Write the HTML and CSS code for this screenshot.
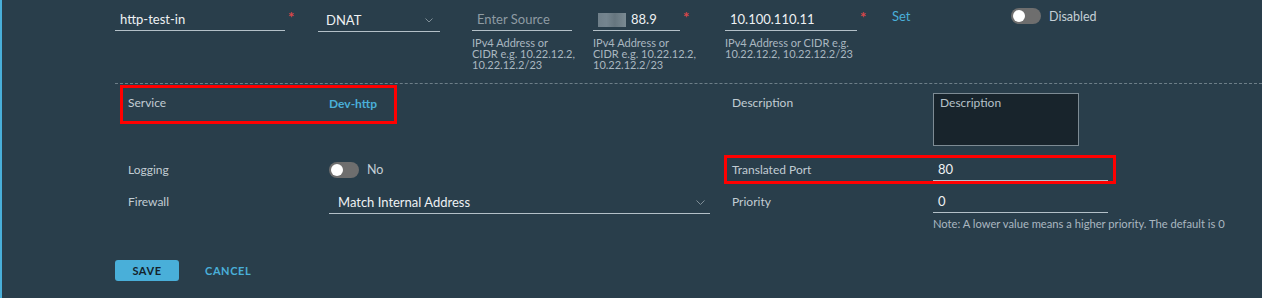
FILE: index.html
```html
<!DOCTYPE html>
<html lang="en">
<head>
<meta charset="utf-8"/>
<meta name="viewport" content="width=device-width, initial-scale=1.0"/>
<title>NAT Rule</title>
<link rel="stylesheet" href="styles.css">
</head>
<body>
  <div class="panel">
    <div class="rule-row">
      <div class="cell cell-name">
        <div class="input-line wide"><span class="value">http-test-in</span></div>
        <span class="req">*</span>
      </div>
      <div class="cell cell-action">
        <div class="input-line select">
          <span class="value">DNAT</span>
          <svg class="chevron" width="8" height="5" viewBox="0 0 8 5"><path d="M0.5 0.5 L4 4 L7.5 0.5" fill="none" stroke="#7f8e97" stroke-width="1"/></svg>
        </div>
      </div>
      <div class="cell cell-source">
        <div class="input-line src"><span class="placeholder">Enter Source</span></div>
        <p class="hint">IPv4 Address or CIDR e.g. 10.22.12.2, 10.22.12.2/23</p>
      </div>
      <div class="cell cell-dest">
        <div class="field-wrap">
          <div class="input-line dest"><span class="masked"></span><span class="value">88.9</span></div>
          <span class="req">*</span>
        </div>
        <p class="hint">IPv4 Address or CIDR e.g. 10.22.12.2, 10.22.12.2/23</p>
      </div>
      <div class="cell cell-trans">
        <div class="field-wrap">
          <div class="input-line trans"><span class="value">10.100.110.11</span></div>
          <span class="req">*</span>
        </div>
        <p class="hint">IPv4 Address or CIDR e.g. 10.22.12.2, 10.22.12.2/23</p>
      </div>
      <div class="cell cell-set"><a class="link" href="#">Set</a></div>
      <div class="cell cell-state">
        <span class="toggle"><span class="knob"></span></span>
        <span class="toggle-text">Disabled</span>
      </div>
    </div>

    <div class="details">
      <div class="field short highlight">
        <span class="label">Service</span>
        <span class="val"><a class="link strong" href="#">Dev-http</a></span>
      </div>
      <div class="field">
        <span class="label">Description</span>
        <div class="textarea"><span class="placeholder-light">Description</span></div>
      </div>

      <div class="field row-mid">
        <span class="label">Logging</span>
        <span class="val">
          <span class="toggle"><span class="knob"></span></span>
          <span class="toggle-text">No</span>
        </span>
      </div>
      <div class="field row-mid highlight">
        <span class="label">Translated Port</span>
        <div class="input-line port"><span class="value">80</span></div>
      </div>

      <div class="field">
        <span class="label">Firewall</span>
        <div class="input-line select fw">
          <span class="value">Match Internal Address</span>
          <svg class="chevron" width="9" height="5" viewBox="0 0 9 5"><path d="M0.5 0.5 L4.5 4.5 L8.5 0.5" fill="none" stroke="#7f8e97" stroke-width="1"/></svg>
        </div>
      </div>
      <div class="field">
        <span class="label">Priority</span>
        <div class="stack">
          <div class="input-line port"><span class="value">0</span></div>
          <p class="note">Note: A lower value means a higher priority. The default is 0</p>
        </div>
      </div>
    </div>

    <div class="actions">
      <button class="btn-primary">SAVE</button>
      <button class="btn-flat">CANCEL</button>
    </div>
  </div>
</body>
</html>
```

FILE: styles.css
```css
* {
  box-sizing: border-box;
}
body {
  margin: 0;
  background: #293e4b;
  font-family: Lato, "Open Sans", sans-serif;
  color: #eef1f3;
}
.panel {
  border-left: 2px solid #49afd9;
  height: 298px;
  padding-left: 113px;
}
.rule-row {
  display: flex;
  height: 83px;
  padding-top: 9px;
}
.cell {
  flex: none;
  position: relative;
}
.cell-name { width: 203px; display: flex; align-items: flex-start; }
.cell-action { width: 154px; }
.cell-source { width: 121px; }
.cell-dest { width: 132px; }
.cell-trans { width: 167px; }
.cell-set { width: 119px; }
.cell-state { display: flex; align-items: center; height: 16px; margin-top: -1px; }
.field-wrap {
  display: flex;
  align-items: flex-start;
}
.input-line {
  height: 22px;
  border-bottom: 1px solid #b3c0c8;
  font-size: 13px;
  line-height: 21px;
  padding-left: 5px;
  display: flex;
  align-items: center;
  white-space: nowrap;
  overflow: hidden;
}
.input-line.wide { width: 170px; }
.input-line.select { width: 122px; height: 23px; padding-left: 8px; justify-content: space-between; padding-right: 7px; }
.input-line.src { width: 100px; }
.input-line.dest { width: 87px; }
.input-line.trans { width: 132px; }
.input-line.port { width: 175px; }
.input-line.fw { width: 381px; padding-left: 9px; padding-right: 5px; }
.placeholder {
  color: #8e9ba3;
}
.masked {
  display: inline-block;
  width: 28px;
  height: 14px;
  margin-right: 5px;
  background: linear-gradient(90deg, #6f7f89 0, #75858f 30%, #66767f 60%, #7a8a93 100%);
  filter: blur(0.6px);
}
.req {
  color: #d9474a;
  font-size: 15px;
  font-weight: bold;
  line-height: 12px;
  margin-left: 3px;
  margin-top: 2px;
}
.hint {
  margin: 6px 0 0;
  width: 104px;
  font-size: 11px;
  line-height: 11px;
  color: #a9b7c0;
}
.cell-trans .hint {
  width: 134px;
}
.link {
  color: #49afd9;
  text-decoration: none;
  font-size: 13px;
}
.cell-set .link {
  display: block;
  line-height: 14px;
}
.link.strong {
  font-size: 12px;
  font-weight: bold;
}
.toggle {
  display: inline-block;
  width: 30px;
  height: 16px;
  border-radius: 8px;
  background: #6e6e6e;
  position: relative;
  flex: none;
}
.knob {
  position: absolute;
  left: 2px;
  top: 2px;
  width: 12px;
  height: 12px;
  border-radius: 50%;
  background: #fff;
}
.toggle-text {
  margin-left: 8px;
  font-size: 12.5px;
  color: #c4cfd6;
}
.details {
  border-top: 1px dashed #6d7e88;
  padding: 1px 0 0 5px;
  display: grid;
  grid-template-columns: 604px 1fr;
  grid-template-rows: 62px 29px auto;
  row-gap: 8px;
}
.field {
  display: flex;
  align-items: flex-start;
  border: 3px solid transparent;
  padding: 0 5px;
  align-self: start;
}
.field.short {
  width: 277px;
  height: 39px;
}
.field.highlight {
  border-color: #ff0000;
}
.field.row-mid {
  height: 29px;
  align-items: center;
  justify-self: start;
}
.field.row-mid:nth-child(3) {
  justify-self: stretch;
}
.label {
  width: 201px;
  flex: none;
  font-size: 12px;
  line-height: 22px;
  color: #c1ccd3;
}
.field.short .label,
.field.short .val {
  margin-top: 4px;
}
.details > .field:nth-child(2) .label {
  margin-top: 4px;
}
.val {
  display: flex;
  align-items: center;
  height: 22px;
}
.textarea {
  margin-top: 5px;
  width: 146px;
  height: 53px;
  background: #18242c;
  border: 1px solid #7d8b94;
  padding: 0 6px;
  line-height: 14px;
}
.placeholder-light {
  font-size: 12px;
  color: #b5c1c9;
}
.field:nth-child(5),
.field:nth-child(6) {
  margin-top: -4px;
}
.stack {
  display: flex;
  flex-direction: column;
}
.note {
  margin: 4px 0 0;
  font-size: 11.2px;
  line-height: 14px;
  color: #a9b7c0;
  white-space: nowrap;
}
.actions {
  display: flex;
  align-items: center;
  margin-top: 26px;
}
.btn-primary {
  width: 64px;
  height: 21px;
  border: none;
  border-radius: 3px;
  background: #49afd9;
  color: #14222a;
  font-family: Lato, sans-serif;
  font-size: 11px;
  font-weight: bold;
  letter-spacing: 0.6px;
  padding: 0;
}
.btn-flat {
  margin-left: 26px;
  border: none;
  background: none;
  padding: 0;
  color: #49afd9;
  font-family: Lato, sans-serif;
  font-size: 11px;
  font-weight: bold;
  letter-spacing: 0.6px;
}
```
